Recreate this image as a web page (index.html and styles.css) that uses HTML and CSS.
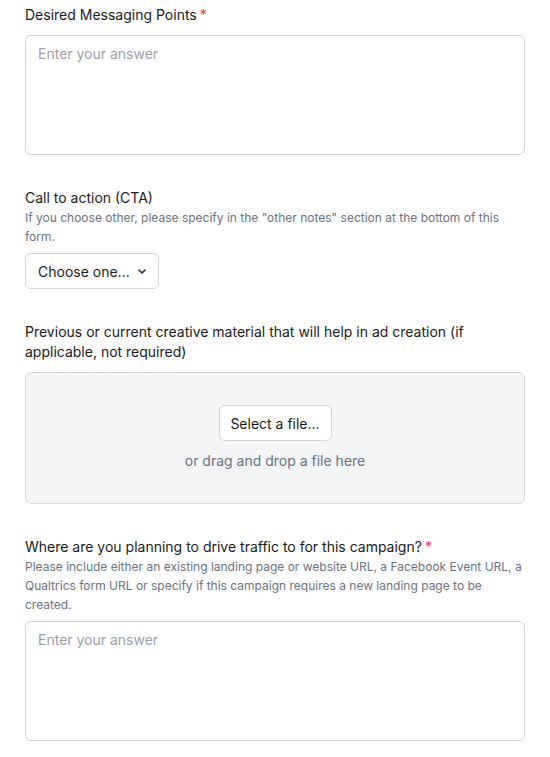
FILE: index.html
```html
<!DOCTYPE html>
<html lang="en">
<head>
<meta charset="utf-8">
<title>Form</title>
<link rel="stylesheet" href="styles.css">
</head>
<body>
<form class="form">
  <div class="field">
    <label class="label">Desired Messaging Points<span class="req">*</span></label>
    <textarea class="textarea" placeholder="Enter your answer"></textarea>
  </div>

  <div class="field">
    <label class="label">Call to action (CTA)</label>
    <p class="help">If you choose other, please specify in the "other notes" section at the bottom of this form.</p>
    <button type="button" class="select">
      <span class="select-text">Choose one...</span>
      <svg class="chev" width="8" height="5" viewBox="0 0 8 5" aria-hidden="true"><path d="M1 1l3 3 3-3" fill="none" stroke="#1f2937" stroke-width="1.6" stroke-linecap="round" stroke-linejoin="round"/></svg>
    </button>
  </div>

  <div class="field">
    <label class="label">Previous or current creative material that will help in ad creation (if applicable, not required)</label>
    <div class="upload">
      <button type="button" class="filebtn">Select a file...</button>
      <div class="drop">or drag and drop a file here</div>
    </div>
  </div>

  <div class="field">
    <label class="label">Where are you planning to drive traffic to for this campaign?<span class="req">*</span></label>
    <p class="help">Please include either an existing landing page or website URL, a Facebook Event URL, a Qualtrics form URL or specify if this campaign requires a new landing page to be created.</p>
    <textarea class="textarea" placeholder="Enter your answer"></textarea>
  </div>
</form>
</body>
</html>
```

FILE: styles.css
```css
* { box-sizing: border-box; }

html, body {
  margin: 0;
  padding: 0;
  background: #ffffff;
}

body {
  font-family: Inter, "Liberation Sans", Arial, sans-serif;
  color: #1a1a1a;
  padding: 5px 25px 0 25px;
}

.form {
  display: flex;
  flex-direction: column;
  gap: 33px;
  width: 500px;
}

.field {
  display: flex;
  flex-direction: column;
  align-items: flex-start;
}

.label {
  display: block;
  font-size: 14px;
  line-height: 20px;
  color: #1a1a1a;
  margin-bottom: 10px;
}

.label:has(+ .help) {
  margin-bottom: 0;
}

.req {
  color: #d6335e;
  margin-left: 3px;
}

.help {
  margin: 0 0 7px 0;
  font-size: 12px;
  line-height: 19px;
  color: #6b7280;
}

.textarea {
  display: block;
  width: 500px;
  height: 120px;
  border: 1px solid #d1d1d1;
  border-radius: 6px;
  padding: 8px 12px;
  font-family: inherit;
  font-size: 14px;
  line-height: 20px;
  resize: none;
  background: #fff;
  color: #1a1a1a;
}

.textarea::placeholder {
  color: #9ca0a6;
}

.select {
  display: flex;
  align-items: center;
  justify-content: flex-start;
  gap: 8px;
  height: 36px;
  width: 134px;
  padding: 0 12px;
  border: 1px solid #d1d1d1;
  border-radius: 6px;
  background: #fff;
  font-family: inherit;
  font-size: 14px;
  color: #1a1a1a;
  white-space: nowrap;
}

.chev {
  display: block;
  flex: none;
}

.upload {
  width: 500px;
  height: 132px;
  border: 1px solid #d6d6d6;
  border-radius: 6px;
  background: #f4f5f7;
  padding: 32px 0;
  display: flex;
  flex-direction: column;
  align-items: center;
  gap: 10px;
}

.filebtn {
  height: 36px;
  width: 113px;
  border: 1px solid #d1d1d1;
  border-radius: 6px;
  background: #fff;
  font-family: inherit;
  font-size: 14px;
  color: #1a1a1a;
  padding: 0;
  white-space: nowrap;
}

.drop {
  font-size: 14px;
  line-height: 20px;
  color: #6b7280;
}
```
